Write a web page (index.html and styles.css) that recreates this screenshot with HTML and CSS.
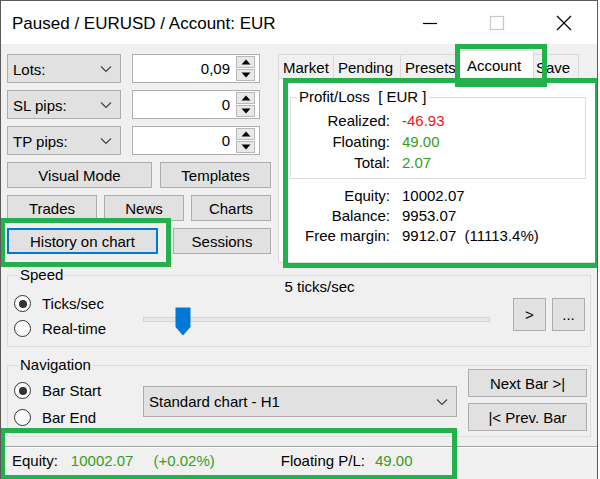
FILE: index.html
```html
<!DOCTYPE html>
<html>
<head>
<meta charset="utf-8">
<link rel="stylesheet" href="styles.css">
</head>
<body>
<div class="window">
  <div class="titlebar">
    <span class="title">Paused / EURUSD / Account: EUR</span>
    <div class="controls">
      <span class="ctl"><svg width="16" height="16" viewBox="0 0 16 16"><line x1="1" y1="8.5" x2="15" y2="8.5" stroke="#000" stroke-width="1.2"/></svg></span>
      <span class="ctl"><svg width="16" height="16" viewBox="0 0 16 16"><rect x="1.5" y="1.5" width="13" height="13" fill="none" stroke="#c8c8c8" stroke-width="1.2"/></svg></span>
      <span class="ctl"><svg width="16" height="16" viewBox="0 0 16 16"><path d="M1 1L15 15M15 1L1 15" stroke="#000" stroke-width="1.2"/></svg></span>
    </div>
  </div>

  <div class="client">
    <div class="top">
      <div class="left">
        <div class="field-row">
          <div class="combo small"><span>Lots:</span><svg class="chev" width="12" height="8" viewBox="0 0 12 8"><polyline points="1,1.5 6,6.5 11,1.5" fill="none" stroke="#444" stroke-width="1.2"/></svg></div>
          <div class="numbox"><span class="num">0,09</span><div class="spin"><span class="spin-btn"><svg width="10" height="6" viewBox="0 0 10 6"><polygon points="5,0.5 9.5,5.5 0.5,5.5" fill="#000"/></svg></span><span class="spin-btn"><svg width="10" height="6" viewBox="0 0 10 6"><polygon points="0.5,0.5 9.5,0.5 5,5.5" fill="#000"/></svg></span></div></div>
        </div>
        <div class="field-row">
          <div class="combo small"><span>SL pips:</span><svg class="chev" width="12" height="8" viewBox="0 0 12 8"><polyline points="1,1.5 6,6.5 11,1.5" fill="none" stroke="#444" stroke-width="1.2"/></svg></div>
          <div class="numbox"><span class="num">0</span><div class="spin"><span class="spin-btn"><svg width="10" height="6" viewBox="0 0 10 6"><polygon points="5,0.5 9.5,5.5 0.5,5.5" fill="#000"/></svg></span><span class="spin-btn"><svg width="10" height="6" viewBox="0 0 10 6"><polygon points="0.5,0.5 9.5,0.5 5,5.5" fill="#000"/></svg></span></div></div>
        </div>
        <div class="field-row">
          <div class="combo small"><span>TP pips:</span><svg class="chev" width="12" height="8" viewBox="0 0 12 8"><polyline points="1,1.5 6,6.5 11,1.5" fill="none" stroke="#444" stroke-width="1.2"/></svg></div>
          <div class="numbox"><span class="num">0</span><div class="spin"><span class="spin-btn"><svg width="10" height="6" viewBox="0 0 10 6"><polygon points="5,0.5 9.5,5.5 0.5,5.5" fill="#000"/></svg></span><span class="spin-btn"><svg width="10" height="6" viewBox="0 0 10 6"><polygon points="0.5,0.5 9.5,0.5 5,5.5" fill="#000"/></svg></span></div></div>
        </div>

        <div class="btn-row row-a">
          <div class="btn b-visual">Visual Mode</div>
          <div class="btn b-templates">Templates</div>
        </div>
        <div class="btn-row row-b">
          <div class="btn b-trades">Trades</div>
          <div class="btn b-news">News</div>
          <div class="btn b-charts">Charts</div>
        </div>
        <div class="btn-row row-c">
          <div class="btn b-history focused">History on chart</div>
          <div class="btn b-sessions">Sessions</div>
        </div>
      </div>

      <div class="tabs">
        <div class="tabstrip">
          <span class="tab t-market">Market</span>
          <span class="tab t-pending">Pending</span>
          <span class="tab t-presets">Presets</span>
          <span class="tab t-account active">Account</span>
          <span class="tab t-save">Save</span>
        </div>
        <div class="tabpanel">
          <fieldset class="pl-group">
            <legend>Profit/Loss&nbsp; [ EUR ]</legend>
            <div class="kv kv-pl">
              <span class="k">Realized:</span><span class="v red">-46.93</span>
              <span class="k">Floating:</span><span class="v green">49.00</span>
              <span class="k">Total:</span><span class="v green">2.07</span>
            </div>
          </fieldset>
          <div class="kv kv-acc">
            <span class="k">Equity:</span><span class="v">10002.07</span>
            <span class="k">Balance:</span><span class="v">9953.07</span>
            <span class="k">Free margin:</span><span class="v">9912.07&nbsp; (11113.4%)</span>
          </div>
        </div>
      </div>
    </div>

    <fieldset class="group speed">
      <legend>Speed</legend>
      <div class="group-body">
        <div class="radios">
          <div class="radio-row"><span class="radio checked"></span><span>Ticks/sec</span></div>
          <div class="radio-row"><span class="radio"></span><span>Real-time</span></div>
        </div>
        <div class="slider">
          <div class="slider-label">5 ticks/sec</div>
          <div class="track"></div>
          <svg class="thumb" width="16" height="29" viewBox="0 0 16 29"><polygon points="0.5,0.5 15.5,0.5 15.5,20 8,28.5 0.5,20" fill="#0078d7"/></svg>
        </div>
        <div class="sq-btns">
          <div class="btn sq">&gt;</div>
          <div class="btn sq">...</div>
        </div>
      </div>
    </fieldset>

    <fieldset class="group nav">
      <legend>Navigation</legend>
      <div class="group-body">
        <div class="radios nav-radios">
          <div class="radio-row"><span class="radio checked"></span><span>Bar Start</span></div>
          <div class="radio-row"><span class="radio"></span><span>Bar End</span></div>
        </div>
        <div class="combo big"><span>Standard chart - H1</span><svg class="chev" width="12" height="8" viewBox="0 0 12 8"><polyline points="1,1.5 6,6.5 11,1.5" fill="none" stroke="#444" stroke-width="1.2"/></svg></div>
        <div class="nav-btns">
          <div class="btn nb">Next Bar &gt;|</div>
          <div class="btn nb">|&lt; Prev. Bar</div>
        </div>
      </div>
    </fieldset>
  </div>

  <div class="status-sep"></div>
  <div class="status">
    <span class="s-lbl">Equity:</span>
    <span class="s-val green">10002.07</span>
    <span class="s-pct green">(+0.02%)</span>
    <span class="s-lbl2">Floating P/L:</span>
    <span class="s-val2 green">49.00</span>
  </div>

  <div class="mark mark-history"></div>
  <div class="mark mark-tab"></div>
  <div class="mark mark-panel"></div>
  <div class="mark mark-status"></div>
</div>
</body>
</html>
```

FILE: styles.css
```css
* { box-sizing: border-box; }
html, body { margin: 0; padding: 0; background: #fff; }
body {
  font-family: "Liberation Sans", Arial, sans-serif;
  font-size: 15px;
  color: #000;
}
.window {
  position: relative;
  width: 598px;
  height: 479px;
  border: 1px solid #5a5a5a;
  border-bottom: none;
  background: #f0f0f0;
  overflow: hidden;
}
.titlebar {
  height: 43px;
  background: #fff;
  display: flex;
  align-items: center;
  padding-left: 11px;
}
.title { font-size: 17px; flex: 1; padding-top: 2px; }
.controls { display: flex; height: 43px; }
.ctl {
  width: 67px;
  display: flex;
  align-items: center;
  justify-content: center;
}

.client { padding: 10px 0 0 6px; }
.top { display: flex; gap: 7px; height: 209px; }
.left { width: 264px; display: flex; flex-direction: column; }
.field-row { display: flex; gap: 11px; height: 29px; margin-bottom: 7px; }
.combo {
  background: #e1e1e1;
  border: 1px solid #adadad;
  display: flex;
  align-items: center;
  justify-content: space-between;
  padding: 0 8px 0 5px;
}
.combo.small { width: 114px; height: 29px; }
.combo.small span { padding-top: 1px; }
.numbox {
  width: 128px;
  height: 29px;
  background: #fff;
  border: 1px solid #adadad;
  display: flex;
  align-items: center;
  justify-content: flex-end;
  padding-right: 4px;
}
.num { margin-right: 6px; }
.spin {
  width: 19px;
  height: 25px;
  display: flex;
  flex-direction: column;
  gap: 1px;
}
.spin-btn {
  flex: 1;
  background: #e8e8e8;
  border: 1px solid #b8b8b8;
  display: flex;
  align-items: center;
  justify-content: center;
}

.btn-row { display: flex; height: 26px; margin-bottom: 7px; }
.btn {
  background: #e1e1e1;
  border: 1px solid #adadad;
  display: flex;
  align-items: center;
  justify-content: center;
  height: 26px;
}
.row-a { gap: 8px; }
.b-visual { width: 145px; }
.b-templates { width: 111px; }
.row-b { gap: 7px; }
.b-trades { width: 90px; }
.b-news { width: 80px; }
.b-charts { width: 80px; }
.row-c { gap: 15px; }
.b-history { width: 151px; }
.b-sessions { width: 98px; }
.btn.focused { border: 2px solid #0078d7; }

.tabs { width: 318px; display: flex; flex-direction: column; }
.tabstrip { display: flex; height: 24px; align-items: flex-end; }
.tab {
  height: 24px;
  padding: 4px 0 0 4px;
  background: #f0f0f0;
  border: 1px solid #d9d9d9;
  border-bottom: none;
  white-space: nowrap;
  overflow: visible;
}
.t-market { width: 56px; }
.t-pending { width: 67px; border-left: none; }
.t-presets { width: 59px; border-left: none; }
.t-account {
  width: 76px;
  height: 29px;
  margin: 0 -2px;
  background: #fff;
  position: relative;
  z-index: 1;
  padding: 6px 0 0 8px;
  margin-bottom: -1px;
}
.t-save { width: 47px; border-left: none; padding-left: 4px; }
.tabpanel {
  height: 185px;
  background: #fff;
  border: 1px solid #d9d9d9;
  padding: 9px 0 0 11px;
}
.pl-group {
  margin: 0;
  width: 296px;
  border: 1px solid #dcdcdc;
  padding: 4px 0 5px 0;
}
.pl-group legend {
  padding: 0 2px;
  margin-left: 6px;
  line-height: 18px;
}
.kv {
  display: grid;
  grid-template-columns: 99px auto;
  column-gap: 12px;
}
.kv .k { text-align: right; }
.kv-pl { line-height: 21px; }
.kv-acc { line-height: 20px; margin-top: 7px; padding-left: 1px; }
.red { color: #f0141e; }
.green { color: #389d1d; }

.group {
  margin: 0;
  width: 584px;
  border: 1px solid #dcdcdc;
  padding: 0;
}
.group legend {
  padding: 0 2px;
  margin-left: 10px;
  line-height: 18px;
}
.speed { margin-top: 3px; }
.nav { margin-top: 9px; }
.group-body { height: 62px; display: flex; }
.radios { width: 135px; padding: 7px 0 0 6px; }
.radio-row { height: 25px; display: flex; align-items: center; gap: 11px; }
.nav-radios { padding-top: 3px; }
.nav-radios .radio-row { height: 27px; }
.radio {
  width: 17px;
  height: 17px;
  border-radius: 50%;
  border: 1px solid #333;
  background: #fff;
  display: flex;
  align-items: center;
  justify-content: center;
  flex: none;
}
.radio.checked { border-width: 1.5px; }
.radio.checked::after {
  content: "";
  width: 8px;
  height: 8px;
  border-radius: 50%;
  background: #333;
}

.slider {
  position: relative;
  width: 347px;
  margin-top: -6px;
}
.slider-label { text-align: center; line-height: 18px; padding-left: 6px; }
.track {
  margin-top: 21px;
  height: 5px;
  background: #e7e7e7;
  border: 1px solid #d6d6d6;
}
.thumb { position: absolute; left: 32px; top: 29px; }
.sq-btns { display: flex; gap: 6px; margin-left: 23px; padding-top: 14px; }
.btn.sq { width: 33px; height: 33px; }

.combo.big {
  width: 314px;
  height: 31px;
  margin-top: 12px;
  padding-left: 5px;
  padding-right: 8px;
}
.nav-btns {
  margin-left: 11px;
  margin-top: -5px;
  display: flex;
  flex-direction: column;
  gap: 6px;
}
.btn.nb { width: 119px; height: 28px; }

.status-sep {
  height: 10px;
  margin-top: 0;
  border-bottom: 1px solid #a0a0a0;
}
.status {
  height: 32px;
  display: flex;
  align-items: center;
  padding-left: 11px;
  padding-bottom: 6px;
  border-top: 1px solid #fff;
}
.s-val { margin-left: 13px; }
.s-pct { margin-left: 20px; }
.s-lbl2 { margin-left: 66px; }
.s-val2 { margin-left: 10px; }

.mark {
  position: absolute;
  border: 5px solid #22b14c;
  z-index: 5;
}
.mark-history { left: -1px; top: 217px; width: 171px; height: 49px; }
.mark-tab { left: 454px; top: 43px; width: 92px; height: 43px; }
.mark-panel { left: 282px; top: 77px; width: 317px; height: 190px; }
.mark-status { left: -1px; top: 427px; width: 457px; height: 52px; }
```
